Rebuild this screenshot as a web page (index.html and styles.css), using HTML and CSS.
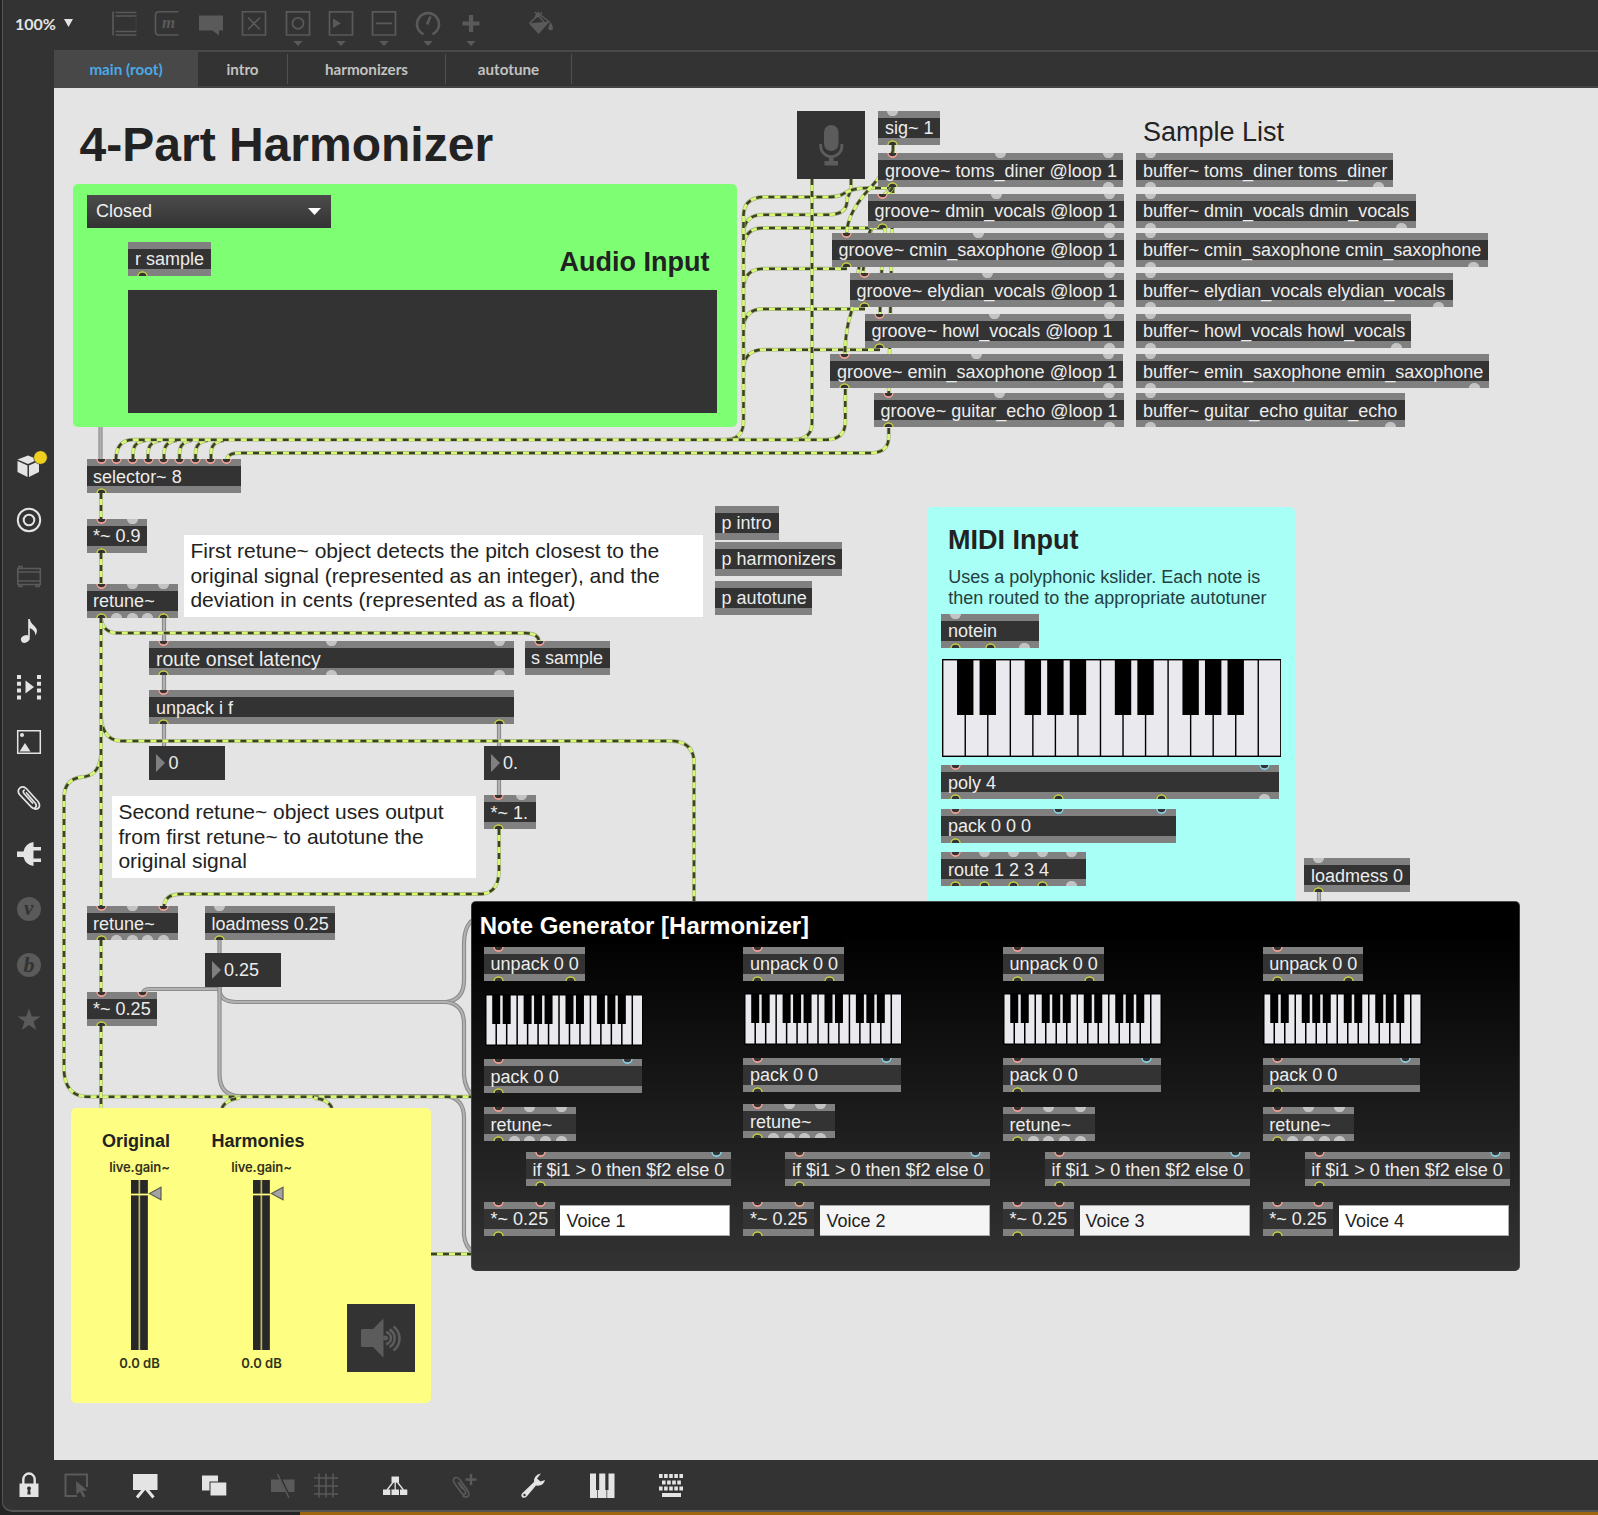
FILE: index.html
```html
<!DOCTYPE html>
<html lang="en">
<head>
<meta charset="utf-8">
<title>4-Part Harmonizer</title>
<link rel="stylesheet" href="styles.css">
</head>
<body>
<div class="window">
  <header class="toolbar">
    <div class="zoom">100%<svg width="9" height="8" viewBox="0 0 9 8"><path d="M0 0h9L4.5 8z" fill="#e4e4e4"/></svg></div>
    <div class="tools">
      <svg class="tool" viewBox="0 0 26 38"><g fill="none" stroke="#5a5a5a" stroke-width="1.6"><path d="M2 2.500v24M4.500 3.500H25.500M4.500 7H25.500M4.500 22.500H25.500M4.500 26H25.500"/><path d="M25 7v15" stroke="#404040" stroke-width="1"/></g></svg>
      <svg class="tool" viewBox="0 0 26 38"><path d="M24.500 2.800H5q-3.500 0-3.500 3.500V22.500q0 3.500 3.500 3.500h19.500" fill="none" stroke="#5a5a5a" stroke-width="1.6"/><text x="8" y="18.500" class="glyph" font-size="17" fill="#5a5a5a">m</text></svg>
      <svg class="tool" viewBox="0 0 26 38"><path d="M1 6.500h24v15h-4v5l-6.500-5H1z" fill="#5a5a5a"/></svg>
      <svg class="tool" viewBox="0 0 26 38"><g fill="none" stroke="#5a5a5a" stroke-width="1.6"><path d="M1.500 2.800h23V26h-23zM7 8.500l12 12M19 8.500l-12 12"/></g></svg>
      <svg class="tool" viewBox="0 0 26 38"><g fill="none" stroke="#5a5a5a" stroke-width="1.7"><path d="M1.500 2.800h23V26h-23z"/><circle cx="13" cy="14.300" r="5.500"/></g><path d="M8.300 32h9.400l-4.700 5z" fill="#5a5a5a"/></svg>
      <svg class="tool" viewBox="0 0 26 38"><path d="M1.500 2.800h23V26h-23z" fill="none" stroke="#5a5a5a" stroke-width="1.7"/><path d="M5 9.500v9.500l8-4.700zM8.300 32h9.400l-4.700 5z" fill="#5a5a5a"/></svg>
      <svg class="tool" viewBox="0 0 26 38"><path d="M1.500 2.800h23V26h-23zM5 14.400h16" fill="none" stroke="#5a5a5a" stroke-width="1.7"/><path d="M8.300 32h9.400l-4.700 5z" fill="#5a5a5a"/></svg>
      <svg class="tool" viewBox="0 0 26 38"><path d="M8.500 25.200a11 11 0 1 1 9 0M12 15.500l3.500-8" fill="none" stroke="#5a5a5a" stroke-width="2.600"/><path d="M8.300 32h9.400l-4.700 5z" fill="#5a5a5a"/></svg>
      <svg class="tool" viewBox="0 0 26 38"><path d="M13 6v17M4.500 14.500h17" fill="none" stroke="#5a5a5a" stroke-width="4.200"/><path d="M8.300 32h9.400l-4.700 5z" fill="#5a5a5a"/></svg>
      <svg class="tool tool-fill" viewBox="0 0 26 38"><path d="M1.500 14.500L11 5l11 8.500M7 3l9 10M11 3l-4 5M14 3.500L9 8" fill="none" stroke="#5a5a5a" stroke-width="1.500"/><path d="M1 14.500l19-2 1 1L10.500 25zM22.500 13q3 5 2.300 7-1 1.800-3 1.200-2-.7-1.500-2.700z" fill="#5a5a5a"/></svg>
    </div>
  </header>

  <div class="middle">
    <aside class="sidebar">
      <svg viewBox="0 0 30 30"><g fill="#e4e4e4"><path d="M3.500 9.500L14 5.500l10 4-10 4.500zM3.500 11l10 4.500V27l-10-5zM15 15.500l10-4.500v11L15 27z"/></g><circle cx="26.500" cy="7.500" r="6.800" fill="#efcf1e" stroke="#333" stroke-width=".6"/></svg>
      <svg viewBox="0 0 30 30"><g fill="none" stroke="#e4e4e4" stroke-width="2"><circle cx="15" cy="15" r="11.200"/><circle cx="15" cy="15" r="5.300"/></g></svg>
      <svg viewBox="0 0 30 30"><path d="M3.800 7.500h22.500v16H3.800zM3.800 11h22.500M3.800 20h22.500M5 7.500V5.500h3v2M5 23.500v2h3v-2M22 23.500v2h3v-2" fill="none" stroke="#5a5a5a" stroke-width="1.6"/></svg>
      <svg viewBox="0 0 30 30"><path d="M14.200 3h1.600q.5 3.500 5 7.500 4 4 .5 9 .5-5-5.500-7.500v9.500h-1.600z" fill="#e4e4e4"/><ellipse cx="11.300" cy="23" rx="4.500" ry="3.500" transform="rotate(-25 11.300 23)" fill="#e4e4e4"/></svg>
      <svg viewBox="0 0 30 30"><path d="M5 3v24.500M25 3v24.500" stroke="#e4e4e4" stroke-width="4" stroke-dasharray="4 2.800"/><path d="M11.500 8.500v13l8.500-6.500z" fill="#e4e4e4"/></svg>
      <svg viewBox="0 0 30 30"><path d="M3.700 3.700h22.600v22.600H3.700z" fill="none" stroke="#e4e4e4" stroke-width="1.500"/><circle cx="8" cy="8" r="2" fill="#e4e4e4"/><path d="M5.500 24.500h11L11 16z" fill="#e4e4e4"/></svg>
      <svg viewBox="0 0 30 30"><path d="M12.500 10l9 10.500q1.800 2.800-.3 4.300-2 1.300-4-.9L5.500 11.500Q2.800 7.500 6 4.800q3.500-2.300 6.500 1L24 18.500q3 4 .3 6.800-3 2-6-.8M18.500 20l-8.500-9.500q-1.500-2.300.2-3.300" fill="none" stroke="#e4e4e4" stroke-width="1.700" stroke-linecap="round"/></svg>
      <svg viewBox="0 0 30 30"><path d="M19.500 3v24q-8-1-10-9H3v-5.500h6.500q2-8.500 10-9.500zM19.500 8h7.500v3.500h-7.500zM19.500 19.500h7.500V23h-7.500z" fill="#e4e4e4"/></svg>
      <svg viewBox="0 0 30 30"><circle cx="15" cy="15" r="12" fill="#5a5a5a"/><text class="glyph" x="10" y="21" font-size="21" fill="#333">v</text></svg>
      <svg viewBox="0 0 30 30"><circle cx="15" cy="15" r="12" fill="#5a5a5a"/><text class="glyph" x="9.500" y="22" font-size="22" fill="#333">b</text></svg>
      <svg viewBox="0 0 30 30"><path d="M15 3.500l2.800 8H26.500l-7 5 2.700 8.500L15 20l-7.200 5 2.700-8.500-7-5h8.700z" fill="#5a5a5a"/></svg>
    </aside>

    <main class="main">
      <nav class="tabs">
        <a class="tab tab-active">main (root)</a>
        <a class="tab tab-intro">intro</a>
        <a class="tab tab-harm">harmonizers</a>
        <a class="tab tab-auto">autotune</a>
      </nav>
      <section class="canvas">
        <div class="patch" id="patch">
          <svg class="cords" id="cords" width="1598" height="1515" viewBox="0 0 1598 1515"></svg>

          <h1 class="label title">4-Part Harmonizer</h1>
          <h2 class="label samples">Sample List</h2>

          <div class="panel panel-audio"></div>
          <div class="menu"><span>Closed</span><svg width="13" height="7" viewBox="0 0 13 7"><path d="M0 0h13L6.500 7z" fill="#fff"/></svg></div>
          <h2 class="label audio">Audio Input</h2>
          <div class="scope"></div>

          <div class="tile mic"><svg viewBox="0 0 68 68"><rect x="27" y="14" width="14.500" height="26" rx="7.200" fill="#5c5c5c"/><path d="M23.700 33v2a10.600 10.600 0 0 0 21.200 0v-2" fill="none" stroke="#5c5c5c" stroke-width="2.800"/><path d="M32 45h4.500v5h4.500v4.500H27.500V50H32z" fill="#5c5c5c"/></svg></div>

          <p class="note note-first">First retune~ object detects the pitch closest to the<br>original signal (represented as an integer), and the<br>deviation in cents (represented as a float)</p>
          <p class="note note-second">Second retune~ object uses output<br>from first retune~ to autotune the<br>original signal</p>

          <div class="panel panel-midi"></div>
          <h2 class="label midi">MIDI Input</h2>
          <p class="label midi-text">Uses a polyphonic kslider. Each note is<br>then routed to the appropriate autotuner</p>

          <div class="panel panel-notes"></div>
          <h2 class="notes-title">Note Generator [Harmonizer]</h2>
          <div class="voice v1">Voice 1</div>
          <div class="voice v2">Voice 2</div>
          <div class="voice v3">Voice 3</div>
          <div class="voice v4">Voice 4</div>

          <div class="panel panel-out">
            <div class="gain gain-a">
              <h3>Original</h3>
              <span class="gain-name">live.gain~</span>
              <svg width="32" height="170" viewBox="0 0 32 170"><path d="M0 0h17v170H0z" fill="#b8b860"/><path d="M0 0h7.500v13.500H0zM9.200 0h7.600v13.500H9.200zM0 15.500h7.500V170H0zM9.200 15.500h7.600V170H9.200z" fill="#282828"/><path d="M0 14.500h17" stroke="#fdfe82" stroke-width="1.200"/><path d="M18.500 13.500L30 7.300v12.400z" fill="#a3a3a3" stroke="#5c5c50" stroke-width="1.200"/></svg>
              <span class="gain-db">0.0 dB</span>
            </div>
            <div class="gain gain-b">
              <h3>Harmonies</h3>
              <span class="gain-name">live.gain~</span>
              <svg width="32" height="170" viewBox="0 0 32 170"><path d="M0 0h17v170H0z" fill="#b8b860"/><path d="M0 0h7.500v13.500H0zM9.200 0h7.600v13.500H9.200zM0 15.500h7.500V170H0zM9.200 15.500h7.600V170H9.200z" fill="#282828"/><path d="M0 14.500h17" stroke="#fdfe82" stroke-width="1.200"/><path d="M18.500 13.500L30 7.300v12.400z" fill="#a3a3a3" stroke="#5c5c50" stroke-width="1.200"/></svg>
              <span class="gain-db">0.0 dB</span>
            </div>
          </div>
          <div class="tile dac"><svg viewBox="0 0 68 68"><path d="M15.500 25h10.500L36.500 14.500v39L26 43H15.500q-1.500 0-1.500-1.500v-15q0-1.500 1.500-1.500z" fill="#5c5c5c"/><circle cx="38.500" cy="34" r="2.500" fill="#5c5c5c"/><path d="M39 28.300a6 6 0 0 1 0 11.800M42.500 25.500a10 10 0 0 1 0 17.500M46.500 22.500a15 15 0 0 1 0 24" fill="none" stroke="#5c5c5c" stroke-width="2.600"/></svg></div>
        </div>
      </section>
    </main>
  </div>

  <footer class="bottombar">
    <svg class="b-lock" viewBox="0 0 30 30"><path d="M5.500 13.500h19V27h-19z" fill="#e4e4e4"/><path d="M9.300 14V9.500a5.700 6 0 0 1 11.400 0V14" fill="none" stroke="#e4e4e4" stroke-width="2.400"/><path d="M15 16.500a2 2 0 0 1 1.200 3.600l.5 4.400h-3.400l.5-4.400A2 2 0 0 1 15 16.500z" fill="#333"/></svg>
    <svg class="b-sel" viewBox="0 0 30 30"><path d="M26 17V4.500H4.500V26H16" fill="none" stroke="#5a5a5a" stroke-width="2"/><path d="M15 11l11.500 9.500h-5l3 6-2.500 1-3-6-3.500 3z" fill="#5a5a5a"/></svg>
    <svg class="b-pres" viewBox="0 0 30 30"><path d="M3 4h24.500v16H3z" fill="#e4e4e4"/><path d="M14 19L7 27.500M16.500 19l7 8.500" stroke="#e4e4e4" stroke-width="3"/></svg>
    <svg class="b-copy" viewBox="0 0 30 30"><path d="M3 5.500h16v6h-8.500v9H3z" fill="#e4e4e4"/><path d="M11.500 12.500h15.800v13H11.500z" fill="#e4e4e4"/></svg>
    <svg class="b-cut" viewBox="0 0 30 30"><path d="M3 9.500h8.500l6 12.500H3zM14.500 9.500h12v12.500h-6z" fill="#5a5a5a"/><path d="M9.500 4l11.500 24" stroke="#5a5a5a" stroke-width="1.500"/></svg>
    <svg class="b-grid" viewBox="0 0 30 30"><path d="M8 3.500v24M15 3.500v24M22 3.500v24M3 8h24M3 16h24M3 24h24" stroke="#5a5a5a" stroke-width="1.400"/></svg>
    <svg class="b-tree" viewBox="0 0 30 30"><path d="M11.500 6.500h7.500v6h-7.500zM3 19.500h7.300v5.500H3zM11.500 19.500h7.500v5.500h-7.500zM20 19.500h7.300v5.500H20z" fill="#e4e4e4"/><path d="M14 11L7 20M15.200 11v9M16.500 11l7 9" stroke="#e4e4e4" stroke-width="1.300"/></svg>
    <svg class="b-clip" viewBox="0 0 30 30"><path d="M10.500 13l5.500 8q1.500 2.500-.3 3.500-1.800.6-3.200-1.500L5 12.500Q3.500 9 6 7.700q3-1 5 2l8 11.500q2 4-.5 5.600-3 1-5-1.300M13.500 19l-4.500-7" fill="none" stroke="#5a5a5a" stroke-width="1.600"/><path d="M22 4v11M16.500 9.500h11" stroke="#5a5a5a" stroke-width="2.400"/></svg>
    <svg class="b-wrench" viewBox="0 0 30 30"><path d="M23 3.500q-7.500 1.500-7 8.500L4 23.500q-1.500 2.500.5 4 2 1 4-.8L18 15.500q7.500 1 9-5.500l-4.500 1.500-3.500-3z" fill="#e4e4e4"/><circle cx="6.500" cy="25" r="1.200" fill="#333"/></svg>
    <svg class="b-keys" viewBox="0 0 30 30"><path d="M3 3.500h24.500V28H3z" fill="#e4e4e4"/><path d="M9 3h3.200v17H9zM18.300 3h3.200v17h-3.200zM10.300 19h.7v9h-.7zM19.500 19h.7v9h-.7z" fill="#333"/></svg>
    <svg class="b-kbd" viewBox="0 0 30 30"><g stroke="#e4e4e4"><path d="M3 6h24.500" stroke-width="4.200" stroke-dasharray="3.600 1.500"/><path d="M6 12.500h19" stroke-width="4" stroke-dasharray="3.600 1.500"/><path d="M3 18.500h24.500" stroke-width="4" stroke-dasharray="3.600 1.500"/><path d="M6 25h19" stroke-width="4"/></g></svg>
  </footer>
</div>
<script src="patch.js"></script>
</body>
</html>
```
FILE: styles.css
```css
* { box-sizing: border-box; }
body {
  margin: 0;
  height: 1515px;
  overflow: hidden;
  background: linear-gradient(90deg, #242424 300px, #a0660f 300px);
  font-family: "Liberation Sans", Arial, sans-serif;
}
h1, h2, h3, p { margin: 0; }
.window {
  display: flex;
  flex-direction: column;
  height: 1512px;
  margin-right: -20px;
  margin-left: 2px;
  border: solid #555;
  border-width: 0 0 2px 1px;
  border-radius: 0 0 0 10px;
  background: #333;
  overflow: hidden;
}

/* toolbar */
.toolbar { display: flex; flex: none; height: 50px; padding-left: 12px; font-family: Lato, sans-serif; }
.zoom { display: flex; align-items: center; gap: 8px; width: 96px; height: 46px; color: #e4e4e4; font-size: 16px; font-weight: 700; }
.tools { display: flex; gap: 17.400px; padding-top: 9px; }
.tool { width: 26px; height: 38px; }
.tool-fill { margin-left: 26px; }
.glyph { font-family: "Liberation Serif", serif; font-style: italic; font-weight: bold; }

.middle { display: flex; flex: 1; min-height: 0; }
.sidebar { display: flex; flex-direction: column; flex: none; gap: 25.600px; width: 51px; padding: 399.500px 0 0 10.700px; }
.sidebar svg { width: 30px; height: 30px; overflow: visible; flex: none; }
.main { display: flex; flex: 1; flex-direction: column; min-width: 0; }

/* tabs */
.tabs { display: flex; flex: none; height: 38px; border-top: 2px solid #484848; border-bottom: 2px solid #434343; font-family: Lato, sans-serif; font-size: 15.200px; font-weight: 700; color: #c2c2c2; }
.tab { height: 30px; margin-top: 2px; line-height: 31px; text-align: center; border-right: 1px solid #505050; }
.tab-active { width: 144px; height: 38px; margin: -2px 0; line-height: 39px; background: #484848; color: #4ba9e6; border: 0; }
.tab-intro { width: 90px; }
.tab-harm { width: 158px; }
.tab-auto { width: 126px; }

/* patching canvas */
.canvas { position: relative; flex: 1; overflow: hidden; background: #e4e4e4; }
.patch { position: absolute; left: -54px; top: -88px; width: 1598px; height: 1515px; color: #222; }
.cords { position: absolute; left: 0; top: 0; }
.cord { fill: none; }
.cord-edge { stroke: #8c8c8c; stroke-width: 4.200; }
.cord-core { stroke: #b2b2b2; stroke-width: 2; }
.signal-edge { stroke: #a9b088; stroke-width: 3.800; }
.signal-core { stroke: #d6fb72; stroke-width: 2.600; }
.signal-dash { stroke: #3b4027; stroke-width: 2.600; stroke-dasharray: 6 6; }

.box { position: absolute; height: 34px; padding: 7.400px 0 0 6.600px; overflow: hidden; background: #333; color: #ececec; font-size: 18px; line-height: 20px; white-space: nowrap; }
.box::before, .box::after { content: ""; position: absolute; left: 0; right: 0; height: 7px; background: #808080; }
.box::before { top: 0; }
.box::after { bottom: 0; }
.box span { position: relative; z-index: 1; }
.box-large { font-size: 19.500px; }
.port { position: absolute; z-index: 2; width: 11px; height: 11px; border-radius: 50%; background: #333; box-shadow: inset 0 0 0 1.700px currentColor; }
.port-in { top: -6px; }
.port-out { bottom: -6px; }
.port-r { color: #f0a497; }
.port-b { color: #8bd0e2; }
.port-y { color: #c2ca4f; }
.port-g { color: #c2c3c5; background: #c2c3c5; }
.number { position: absolute; display: flex; align-items: center; gap: 3px; width: 76px; height: 34px; padding-left: 7px; background: #333; color: #ececec; font-size: 18px; }
.number::before { content: ""; border: solid transparent; border-width: 9px 0 9px 9px; border-left-color: #808080; }
.keys { position: absolute; }

.label { position: absolute; white-space: nowrap; }
.title { left: 79.600px; top: 117px; font-size: 48px; line-height: 56px; }
.samples { left: 1143px; top: 116px; font-size: 27px; font-weight: normal; line-height: 32px; }
.audio { left: 559.500px; top: 246px; font-size: 27px; line-height: 32px; }
.midi { left: 948px; top: 524px; font-size: 27px; line-height: 32px; }
.midi-text { left: 948.200px; top: 567px; font-size: 18px; line-height: 20.500px; color: #24403e; }

.panel { position: absolute; border-radius: 5px; }
.panel-audio { left: 73.400px; top: 184px; width: 664px; height: 243px; background: #7eff73; }
.panel-midi { left: 926.600px; top: 506.500px; width: 368.800px; height: 420px; background: #a7fff6; }
.panel-notes { left: 471px; top: 901px; width: 1048.500px; height: 370px; background: linear-gradient(#000, #000 8%, #333); border: 1px solid rgba(90, 90, 90, .6); }
.panel-out { left: 70.500px; top: 1108px; width: 360.500px; height: 295px; background: #fdfe82; }

.menu { position: absolute; left: 87px; top: 195px; display: flex; align-items: center; justify-content: space-between; width: 244px; height: 33px; padding: 0 10px 0 9px; background: linear-gradient(#4c4c4c, #333); color: #f0f0f0; font-size: 18px; }
.scope { position: absolute; left: 128px; top: 290px; width: 589px; height: 123px; background: #333; }
.tile { position: absolute; width: 68px; height: 68px; background: #333; }
.mic { left: 797px; top: 111px; }
.dac { left: 347px; top: 1304px; }

.note { position: absolute; padding: 4px 0 0 6px; height: 82px; background: #fff; font-size: 21px; line-height: 24.500px; white-space: nowrap; }
.note-first { left: 184.400px; top: 535px; width: 519px; }
.note-second { left: 112.400px; top: 796px; width: 364px; }

.notes-title { position: absolute; left: 473px; top: 909px; width: 371px; height: 35px; padding-left: 6.700px; background: #000; color: #fff; font-size: 24px; line-height: 34px; white-space: nowrap; }
.voice { position: absolute; top: 1205px; width: 170px; height: 31px; padding-left: 6px; background: #fff; border: solid #aaa; border-width: 1px 1px 1px 0; font-size: 18px; line-height: 30px; }
.v1 { left: 560.400px; }
.v2 { left: 820.400px; background: #f5f5f5; }
.v3 { left: 1079.500px; background: #f3f3f3; }
.v4 { left: 1339px; }

.gain { position: absolute; top: 22px; display: flex; flex-direction: column; align-items: center; width: 120px; color: #33331c; font-family: Inter, sans-serif; font-size: 13px; font-weight: 600; }
.gain-a { left: 5.500px; }
.gain-b { left: 127.500px; }
.gain h3 { font: bold 18px/22px "Liberation Sans", Arial, sans-serif; color: #222; }
.gain-name { height: 28px; line-height: 30px; padding-left: 7px; letter-spacing: -.1px; }
.gain svg { margin-left: 22px; }
.gain-db { line-height: 27px; padding-left: 7px; }

/* bottom bar */
.bottombar { display: flex; flex: none; align-items: center; height: 50px; padding-left: 10.700px; }
.bottombar svg { width: 30px; height: 30px; margin-right: 13px; }
.bottombar .b-lock { margin-right: 17px; }
.bottombar .b-sel { margin-right: 39px; }
.bottombar .b-pres { margin-right: 39px; }
.bottombar .b-copy { margin-right: 39px; }
.bottombar .b-cut { margin-right: 13.500px; }
.bottombar .b-grid { margin-right: 39px; }
.bottombar .b-tree { margin-right: 39px; }
.bottombar .b-clip { margin-right: 39px; }
.bottombar .b-wrench { margin-right: 39px; }
.bottombar .b-keys { margin-right: 39px; }
```
FILE: patch.js
```js
// Objects of the patch: x, y, right edge, text, inlets, outlets.
// Port letters: r signal/hot inlet, b cold inlet, y outlet, g unconnected.
const boxes = [
  [878.3, 111, 940, "sig~ 1", "g", "y"],
  [878.4, 153.3, 1123, "groove~ toms_diner @loop 1", "rgg", "yg"],
  [868, 194, 1124, "groove~ dmin_vocals @loop 1", "rgg", "yg"],
  [832, 233, 1124, "groove~ cmin_saxophone @loop 1", "rgg", "yg"],
  [850, 273.3, 1124, "groove~ elydian_vocals @loop 1", "rgg", "yg"],
  [865, 314, 1124, "groove~ howl_vocals @loop 1", "rgg", "yg"],
  [830.4, 354.3, 1123, "groove~ emin_saxophone @loop 1", "rgg", "yg"],
  [874, 393.3, 1124, "groove~ guitar_echo @loop 1", "rgg", "yg"],
  [1136.3, 153.3, 1393, "buffer~ toms_diner toms_diner", "g", "gg"],
  [1136.3, 194, 1416.4, "buffer~ dmin_vocals dmin_vocals", "g", "gg"],
  [1136.3, 233, 1488.4, "buffer~ cmin_saxophone cmin_saxophone", "g", "gg"],
  [1136.3, 273.3, 1452.7, "buffer~ elydian_vocals elydian_vocals", "g", "gg"],
  [1136.3, 314, 1411, "buffer~ howl_vocals howl_vocals", "g", "gg"],
  [1136.3, 354.3, 1489, "buffer~ emin_saxophone emin_saxophone", "g", "gg"],
  [1136.3, 393.3, 1404.6, "buffer~ guitar_echo guitar_echo", "g", "gg"],
  [128.4, 242, 211, "r sample", "", "y"],
  [86.5, 459.3, 241, "selector~ 8", "rrrrrrrrr", "y"],
  [86.5, 519, 147.4, "*~ 0.9", "rg", "y"],
  [86.5, 584, 178, "retune~", "rgg", "ygggy"],
  [149.4, 641.3, 514.4, "route onset latency", "rgg", "ygg", "box-large"],
  [524.5, 641, 610, "s sample", "r", ""],
  [149.4, 690.4, 514.4, "unpack i f", "r", "yy"],
  [484, 795.3, 536, "*~ 1.", "rg", "y"],
  [86.5, 906.3, 178, "retune~", "rgr", "ygggg"],
  [205, 906.3, 335.4, "loadmess 0.25", "g", "y"],
  [86.5, 992, 157, "*~ 0.25", "rr", "y"],
  [715, 506, 779, "p intro", "", ""],
  [715, 542, 842.4, "p harmonizers", "", ""],
  [715, 581, 812.4, "p autotune", "", ""],
  [941.4, 614, 1039, "notein", "g", "yyg"],
  [941.4, 765.3, 1279, "poly 4", "rb", "yyyg"],
  [941.4, 809, 1176.4, "pack 0 0 0", "rbb", "y"],
  [941.4, 852.3, 1086.4, "route 1 2 3 4", "rgggg", "yyyyg"],
  [1304.4, 858.3, 1410.4, "loadmess 0", "g", "y"],
];
const voices = [[484, 1059.3, 1107.3], [743.3, 1058, 1104.3], [1003, 1058, 1107.3], [1262.6, 1058, 1107.3]];
for (const [x, packY, retuneY] of voices) {
  boxes.push([x, 947, x + 100.8, "unpack 0 0", "r", "yy"]);
  boxes.push([x, packY, x + 157.8, "pack 0 0", "rb", "y"]);
  boxes.push([x, retuneY, x + 91.7, "retune~", "rgg", "ygggg"]);
  boxes.push([x + 42, 1152.3, x + 247, "if $i1 > 0 then $f2 else 0", "rb", "y"]);
  boxes.push([x, 1202, x + 70.7, "*~ 0.25", "rr", "y"]);
}
const numbers = [[149.4, 746, "0"], [484, 746, "0."], [205, 953, "0.25"]];

// Patch cords as SVG paths; later ones are drawn over earlier ones.
const control = [
  "M100.500 427V460",
  "M164 617V642", "M164 675V691", "M164 724V747", "M499 724V747", "M499 780V796",
  "M219.500 940V954", "M1319 892V902",
  "M219.500 987V989H150Q143.500 989 143 993",
  "M219.500 987V990Q220 1002 237 1002H446Q464 1000 464 980V945Q464 926 473 920",
  "M446 1002Q464 1004 464 1024V1075Q465 1090 474 1096",
  "M219.500 987V1075Q220 1096 240 1096H446Q464 1098 464 1118V1235Q465 1247 474 1253",
];
const signal = [
  "M893 145V154",
  "M133 460V454Q133 441 146 440.500", "M148 460V454Q148 441 161 440.500", "M164 460V454Q164 441 177 440.500",
  "M179.500 460V454Q179.500 441 192 440.500", "M195.500 460V454Q195.500 441 208 440.500", "M211 460V454Q211 441 224 440.500",
  "M851 179V186Q850 195 847 198V202Q846 214.700 828 214.700H763Q745 215 743.500 232",
  "M883 228H763Q745 228 743.500 246",
  "M847 268.700H763Q745 269 743.500 287",
  "M865 309H763Q745 309 743.500 327",
  "M880 349.700H763Q745 350 743.500 368",
  "M893 188H868Q852 188 843 194Q838 197 828 197H763Q743.500 198 743.500 216V422Q743 439.700 725 439.700",
  "M812 179V422Q812 439.700 794 439.700",
  "M888.700 428V438Q888 453 870 453H240Q227 453 227 460",
  "M845.300 389V422Q845 439.700 826 439.700H133Q116 440 116 460",
  "M893 150Q890 165 872 186Q847 212 846.700 234",
  "M893 187L884 195", "M893 187Q866 225 863 274", "M893 187Q882 225 880 315", "M893 187L888.700 394",
  "M893 187Q860 235 852 310Q845 330 845 356",
  "M101 493V520", "M101 553V585",
  "M101 617Q102 633 118 633H524Q539 633 539 642",
  "M101 715Q102 741 122 741H672Q694 742 694 763V902",
  "M101 755Q99 776 82 777Q64 779 64 798V1070Q65 1096.700 88 1096.700H472",
  "M101 617V907",
  "M499 829V872Q498 894 480 894H182Q164 894 164 907",
  "M101 940V993", "M101 1026V1109",
  "M222 1108Q226 1099 240 1098", "M332 1108Q328 1099 314 1098",
  "M431 1254H472",
];

const patch = document.getElementById("patch");
const cords = document.getElementById("cords");
const line = (d, cls) => `<path d="${d}" class="cord ${cls}"/>`;
cords.innerHTML =
  control.map(d => line(d, "cord-edge") + line(d, "cord-core")).join("") +
  signal.map(d => line(d, "signal-edge") + line(d, "signal-core") + line(d, "signal-dash")).join("");

function addPorts(el, letters, side, width) {
  const step = letters.length > 1 ? (width - 29) / (letters.length - 1) : 0;
  [...letters].forEach((kind, i) => {
    const port = document.createElement("i");
    port.className = `port port-${side} port-${kind}`;
    port.style.left = 14.5 + i * step - 5.5 + "px";
    el.append(port);
  });
}

for (const [x, y, right, text, ins, outs, extra] of boxes) {
  const el = document.createElement("div");
  el.className = "box " + (extra || "");
  el.style.cssText = `left:${x}px;top:${y}px;width:${right - x}px`;
  const label = document.createElement("span");
  label.textContent = text;
  el.append(label);
  addPorts(el, ins, "in", right - x);
  addPorts(el, outs, "out", right - x);
  patch.append(el);
}

for (const [x, y, text] of numbers) {
  const el = document.createElement("div");
  el.className = "number";
  el.style.cssText = `left:${x}px;top:${y}px`;
  el.textContent = text;
  patch.append(el);
}

// Two-octave keyboard of fifteen white keys.
function keyboard(x, y, w, h, gap, blackW, blackH) {
  const pitch = (w - gap) / 15;
  let s = `<rect width="${w}" height="${h}" fill="#000"/>`;
  for (let i = 0; i < 15; i++)
    s += `<rect x="${gap + i * pitch}" y="${gap}" width="${pitch - gap}" height="${h - 2 * gap}" fill="#eae9ee"/>`;
  for (const i of [1, 2, 4, 5, 6, 8, 9, 11, 12, 13])
    s += `<rect x="${gap / 2 + i * pitch - blackW / 2}" width="${blackW}" height="${blackH}" fill="#000"/>`;
  patch.insertAdjacentHTML("beforeend",
    `<svg class="keys" style="left:${x}px;top:${y}px" width="${w}" height="${h}">${s}</svg>`);
}
keyboard(941.5, 659, 339.5, 98, 1.4, 16.4, 56);
keyboard(484.5, 994, 158.5, 52, 1.5, 8, 30);
keyboard(743.5, 993, 158.5, 52, 1.5, 8, 30);
keyboard(1003, 993, 159, 52, 1.5, 8, 30);
keyboard(1262.5, 993, 159, 52, 1.5, 8, 30);
```
